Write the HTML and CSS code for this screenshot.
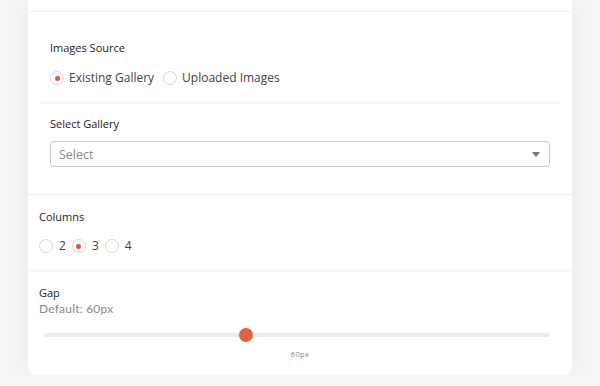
FILE: index.html
```html
<!DOCTYPE html>
<html lang="en">

<head>
  <meta charset="UTF-8" />
  <meta name="viewport" content="width=device-width, initial-scale=1.0" />
  <title>Gallery Settings</title>
  <link rel="stylesheet" href="styles.css">
</head>

<body>

  <div class="panel">
    <!-- end of the previous section -->
    <div class="panel-section stub"></div>

    <div class="panel-section source">
      <div class="group">
        <div class="field">
          <div class="field-label">Images Source</div>
          <div class="radio-row">
            <label class="radio checked"><span class="dot"></span>Existing Gallery</label>
            <label class="radio"><span class="dot"></span>Uploaded Images</label>
          </div>
        </div>
        <div class="field">
          <div class="field-label">Select Gallery</div>
          <div class="select">
            <span>Select</span>
            <span class="caret"></span>
          </div>
        </div>
      </div>
    </div>

    <div class="panel-section">
      <div class="field-label">Columns</div>
      <div class="radio-row small">
        <label class="radio"><span class="dot"></span>2</label>
        <label class="radio checked"><span class="dot"></span>3</label>
        <label class="radio"><span class="dot"></span>4</label>
      </div>
    </div>

    <div class="panel-section gap-section">
      <div class="field-label">Gap</div>
      <div class="hint">Default: 60px</div>
      <div class="slider">
        <div class="track"></div>
        <div class="thumb" style="left: 40%"></div>
      </div>
      <div class="slider-value">60px</div>
    </div>
  </div>

</body>

</html>
```

FILE: styles.css
```css
* {
  margin: 0;
  padding: 0;
  box-sizing: border-box;
}

body {
  font-family: "Open Sans", sans-serif;
  background-color: #f6f6f6;
  color: #333;
}

.panel {
  width: 544px;
  margin: 0 28px;
  background: #fff;
  border-radius: 0 0 9px 9px;
  box-shadow: 0 0 28px rgba(0, 0, 0, 0.06);
}

.panel-section {
  padding: 14px 11px 16px;
  border-bottom: 1px solid #eee;
}

.panel-section:last-child {
  border-bottom: none;
}

.panel-section.stub {
  height: 12px;
  padding: 0;
}

.panel-section.source {
  padding: 0 11px 27px;
}

.group .field {
  padding: 0 11px;
}

.group .field:first-child {
  padding-top: 28px;
  padding-bottom: 16px;
  border-bottom: 1px solid #eee;
  margin-bottom: 13px;
}

.field-label {
  font-size: 11px;
  line-height: 16px;
  font-weight: 500;
  color: #222;
}

.radio-row {
  display: flex;
  gap: 9px;
  margin-top: 14px;
  font-size: 12px;
  line-height: 16px;
  color: #444;
}

.radio-row.small {
  margin-top: 13px;
  gap: 6px;
}

.radio {
  display: flex;
  align-items: center;
  gap: 5px;
}

.radio-row.small .radio {
  gap: 6px;
}

.dot {
  width: 14px;
  height: 14px;
  border: 1px solid #d9d9d9;
  border-radius: 50%;
  display: flex;
  align-items: center;
  justify-content: center;
}

.radio.checked .dot::after {
  content: "";
  width: 5px;
  height: 5px;
  border-radius: 50%;
  background: #e2552c;
}

.select {
  margin-top: 9px;
  height: 26px;
  border: 1px solid #c6c6c6;
  border-radius: 4px;
  display: flex;
  align-items: center;
  justify-content: space-between;
  padding: 0 9px 0 8px;
  font-size: 12.5px;
  color: #8a8a8a;
}

.caret {
  width: 0;
  height: 0;
  border-left: 4px solid transparent;
  border-right: 4px solid transparent;
  border-top: 5px solid #777;
}

.gap-section {
  padding-bottom: 16px;
}

.hint {
  font-family: "Lato", sans-serif;
  font-size: 12px;
  line-height: 16px;
  color: #888;
  letter-spacing: 0.2px;
}

.slider {
  position: relative;
  height: 14px;
  margin: 11px 11px 0 5px;
  display: flex;
  align-items: center;
}

.track {
  flex: 1;
  height: 4px;
  border-radius: 2px;
  background: #ebebeb;
}

.thumb {
  position: absolute;
  top: 0;
  width: 14px;
  height: 14px;
  margin-left: -7px;
  border-radius: 50%;
  background: #e0613f;
}

.slider-value {
  margin-top: 7px;
  text-align: center;
  font-size: 7.5px;
  line-height: 10px;
  color: #888;
  letter-spacing: 0.3px;
}
```
